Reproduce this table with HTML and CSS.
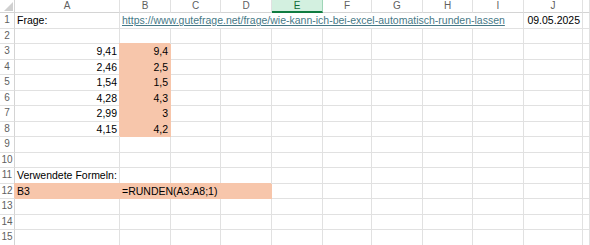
FILE: index.html
```html
<!DOCTYPE html>
<html lang="de">
<head>
<meta charset="utf-8">
<title>Excel</title>
<link rel="stylesheet" href="styles.css">
</head>
<body>
<div class="sheet">
  <div class="corner"><span class="tri"></span></div>
  <div class="ch">A</div><div class="ch">B</div><div class="ch">C</div><div class="ch">D</div>
  <div class="ch sel">E</div><div class="ch">F</div><div class="ch">G</div><div class="ch">H</div>
  <div class="ch">I</div><div class="ch">J</div><div class="ch last"></div>

  <div class="rh">1</div>
  <div class="c">Frage:</div>
  <div class="c span8"><span class="link">https://www.gutefrage.net/frage/wie-kann-ich-bei-excel-automatisch-runden-lassen</span></div>
  <div class="c num">09.05.2025</div>
  <div class="c last"></div>

  <div class="rh">2</div>
  <div class="c"></div><div class="c"></div><div class="c"></div><div class="c"></div><div class="c"></div><div class="c"></div><div class="c"></div><div class="c"></div><div class="c"></div><div class="c"></div><div class="c last"></div>

  <div class="rh">3</div>
  <div class="c num">9,41</div><div class="c num fill">9,4</div><div class="c"></div><div class="c"></div><div class="c"></div><div class="c"></div><div class="c"></div><div class="c"></div><div class="c"></div><div class="c"></div><div class="c last"></div>

  <div class="rh">4</div>
  <div class="c num">2,46</div><div class="c num fill">2,5</div><div class="c"></div><div class="c"></div><div class="c"></div><div class="c"></div><div class="c"></div><div class="c"></div><div class="c"></div><div class="c"></div><div class="c last"></div>

  <div class="rh">5</div>
  <div class="c num">1,54</div><div class="c num fill">1,5</div><div class="c"></div><div class="c"></div><div class="c"></div><div class="c"></div><div class="c"></div><div class="c"></div><div class="c"></div><div class="c"></div><div class="c last"></div>

  <div class="rh">6</div>
  <div class="c num">4,28</div><div class="c num fill">4,3</div><div class="c"></div><div class="c"></div><div class="c"></div><div class="c"></div><div class="c"></div><div class="c"></div><div class="c"></div><div class="c"></div><div class="c last"></div>

  <div class="rh">7</div>
  <div class="c num">2,99</div><div class="c num fill">3</div><div class="c"></div><div class="c"></div><div class="c"></div><div class="c"></div><div class="c"></div><div class="c"></div><div class="c"></div><div class="c"></div><div class="c last"></div>

  <div class="rh">8</div>
  <div class="c num">4,15</div><div class="c num fill">4,2</div><div class="c"></div><div class="c"></div><div class="c"></div><div class="c"></div><div class="c"></div><div class="c"></div><div class="c"></div><div class="c"></div><div class="c last"></div>

  <div class="rh">9</div>
  <div class="c"></div><div class="c"></div><div class="c"></div><div class="c"></div><div class="c"></div><div class="c"></div><div class="c"></div><div class="c"></div><div class="c"></div><div class="c"></div><div class="c last"></div>

  <div class="rh">10</div>
  <div class="c"></div><div class="c"></div><div class="c"></div><div class="c"></div><div class="c"></div><div class="c"></div><div class="c"></div><div class="c"></div><div class="c"></div><div class="c"></div><div class="c last"></div>

  <div class="rh">11</div>
  <div class="c">Verwendete Formeln:</div><div class="c"></div><div class="c"></div><div class="c"></div><div class="c"></div><div class="c"></div><div class="c"></div><div class="c"></div><div class="c"></div><div class="c"></div><div class="c last"></div>

  <div class="rh">12</div>
  <div class="c fill">B3</div><div class="c fill span3">=RUNDEN(A3:A8;1)</div><div class="c"></div><div class="c"></div><div class="c"></div><div class="c"></div><div class="c"></div><div class="c"></div><div class="c last"></div>

  <div class="rh">13</div>
  <div class="c"></div><div class="c"></div><div class="c"></div><div class="c"></div><div class="c"></div><div class="c"></div><div class="c"></div><div class="c"></div><div class="c"></div><div class="c"></div><div class="c last"></div>

  <div class="rh">14</div>
  <div class="c"></div><div class="c"></div><div class="c"></div><div class="c"></div><div class="c"></div><div class="c"></div><div class="c"></div><div class="c"></div><div class="c"></div><div class="c"></div><div class="c last"></div>

  <div class="rh">15</div>
  <div class="c"></div><div class="c"></div><div class="c"></div><div class="c"></div><div class="c"></div><div class="c"></div><div class="c"></div><div class="c"></div><div class="c"></div><div class="c"></div><div class="c last"></div>
</div>
</body>
</html>
```
FILE: styles.css
```css
html, body {
  margin: 0;
  padding: 0;
  background: #fff;
  overflow: hidden;
}
.sheet {
  display: grid;
  grid-template-columns: 15px 105px 51px 50px 51px 51px 49px 51px 50px 51px 59px 7px;
  grid-template-rows: 13px repeat(15, 15.5px);
  font-family: "Liberation Sans", Arial, sans-serif;
  font-size: 10.5px;
  color: #000;
  width: 590px;
  height: 245px;
  overflow: hidden;
}
.sheet > div {
  box-sizing: border-box;
  border-right: 1px solid #e1e1e1;
  border-bottom: 1px solid #e1e1e1;
  white-space: nowrap;
  overflow: hidden;
  line-height: 14px;
}
.corner {
  position: relative;
  background: #fff;
  border-bottom-color: #d4d4d4 !important;
  border-right-color: #d4d4d4 !important;
}
.tri {
  position: absolute;
  right: 1px;
  bottom: 1px;
  width: 0;
  height: 0;
  border-left: 9px solid transparent;
  border-bottom: 9px solid #d0d0d0;
}
.ch {
  text-align: center;
  color: #5f5f5f;
  font-size: 10px;
  line-height: 12px !important;
  border-bottom-color: #d4d4d4 !important;
}
.ch.sel {
  background: #d3f0e0;
  color: #0e6b38;
  border-bottom: 2px solid #107c41 !important;
  border-right-color: #9fd5b7 !important;
  line-height: 11px !important;
}
.rh {
  text-align: center;
  color: #5f5f5f;
  font-size: 10px;
  border-right-color: #d4d4d4 !important;
}
.c {
  padding: 0 2px;
}
.num {
  text-align: right;
}
.fill {
  background: #f7c6ab;
  border-color: #f7c6ab !important;
  box-shadow: -1px -1px 0 #f7c6ab;
}
.span8 {
  grid-column: span 8;
}
.span3 {
  grid-column: span 3;
}
.link {
  color: #467886;
  text-decoration: underline;
}
```
